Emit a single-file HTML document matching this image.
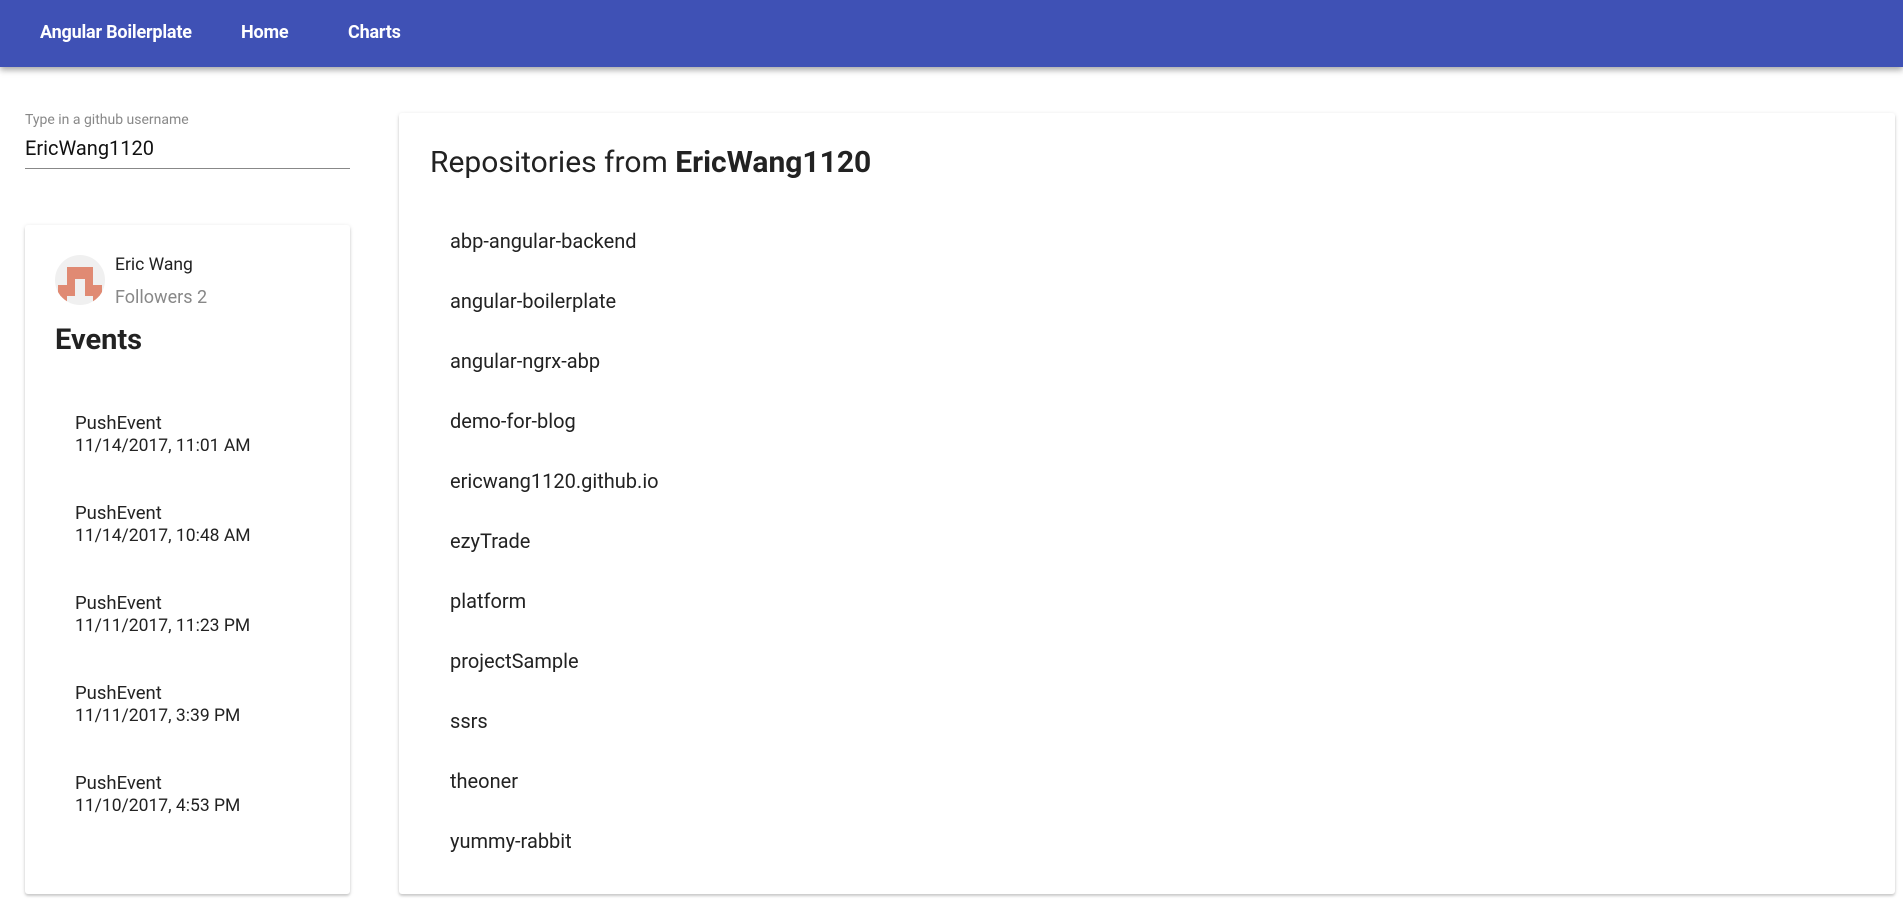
<!DOCTYPE html>
<html><head><meta charset="utf-8"><style>
*{margin:0;padding:0;box-sizing:border-box}
body{width:1903px;height:902px;background:#fff;font-family:Roboto,"Liberation Sans",sans-serif;color:#222;position:relative;overflow:hidden}
.nav{position:absolute;left:0;top:0;width:1903px;height:67px;background:#3f51b5;box-shadow:0 3px 6px rgba(0,0,0,.35)}
.nav span{position:absolute;top:22px;color:#fff;font-size:18px;font-weight:bold;letter-spacing:-0.2px}
.a{position:absolute;white-space:nowrap}
.card{position:absolute;background:#fff;border-radius:3px;box-shadow:0 2px 2px rgba(0,0,0,.14),0 1px 5px rgba(0,0,0,.12)}
.ev1{font-size:18.5px;color:#222;line-height:22px}
.ev2{font-size:17.5px;color:#222;margin-top:2px;line-height:21px}
.repo{position:absolute;left:450px;font-size:20px;color:#222}
</style></head><body>
<div class="nav"><span style="left:40px">Angular Boilerplate</span><span style="left:241px">Home</span><span style="left:348px">Charts</span></div>
<div class="a" style="left:25px;top:112px;font-size:14px;color:#888">Type in a github username</div>
<div class="a" style="left:25px;top:136px;font-size:20px;color:#111">EricWang1120</div>
<div class="a" style="left:25px;top:168px;width:325px;height:1px;background:#888"></div>
<div class="card" style="left:25px;top:225px;width:325px;height:669px"></div>
<svg class="a" style="left:55px;top:255px" width="50" height="50" viewBox="0 0 50 50"><defs><clipPath id="c"><circle cx="25" cy="25" r="25"/></clipPath></defs><circle cx="25" cy="25" r="25" fill="#f0f0f0"/><g clip-path="url(#c)" fill="#e08a73"><rect x="12" y="12" width="26" height="19"/><rect x="3" y="30" width="44" height="11"/><rect x="3" y="40" width="9" height="12"/><rect x="38" y="40" width="9" height="12"/></g><rect x="20" y="24" width="10" height="17" fill="#f0f0f0"/></svg>
<div class="a" style="left:115px;top:255px;font-size:17.5px;color:#222">Eric Wang</div>
<div class="a" style="left:115px;top:287px;font-size:18px;color:#888">Followers 2</div>
<div class="a" style="left:55px;top:323px;font-size:29px;font-weight:bold;color:#222">Events</div>
<div class="a" style="left:75px;top:412px"><div class="ev1">PushEvent</div><div class="ev2">11/14/2017, 11:01 AM</div></div>
<div class="a" style="left:75px;top:502px"><div class="ev1">PushEvent</div><div class="ev2">11/14/2017, 10:48 AM</div></div>
<div class="a" style="left:75px;top:592px"><div class="ev1">PushEvent</div><div class="ev2">11/11/2017, 11:23 PM</div></div>
<div class="a" style="left:75px;top:682px"><div class="ev1">PushEvent</div><div class="ev2">11/11/2017, 3:39 PM</div></div>
<div class="a" style="left:75px;top:772px"><div class="ev1">PushEvent</div><div class="ev2">11/10/2017, 4:53 PM</div></div>
<div class="card" style="left:399px;top:113px;width:1496px;height:781px"></div>
<div class="a" style="left:430px;top:145px;font-size:30px;color:#222">Repositories from <b>EricWang1120</b></div>
<div class="repo" style="top:229px">abp-angular-backend</div>
<div class="repo" style="top:289px">angular-boilerplate</div>
<div class="repo" style="top:349px">angular-ngrx-abp</div>
<div class="repo" style="top:409px">demo-for-blog</div>
<div class="repo" style="top:469px">ericwang1120.github.io</div>
<div class="repo" style="top:529px">ezyTrade</div>
<div class="repo" style="top:589px">platform</div>
<div class="repo" style="top:649px">projectSample</div>
<div class="repo" style="top:709px">ssrs</div>
<div class="repo" style="top:769px">theoner</div>
<div class="repo" style="top:829px">yummy-rabbit</div>
</body></html>
